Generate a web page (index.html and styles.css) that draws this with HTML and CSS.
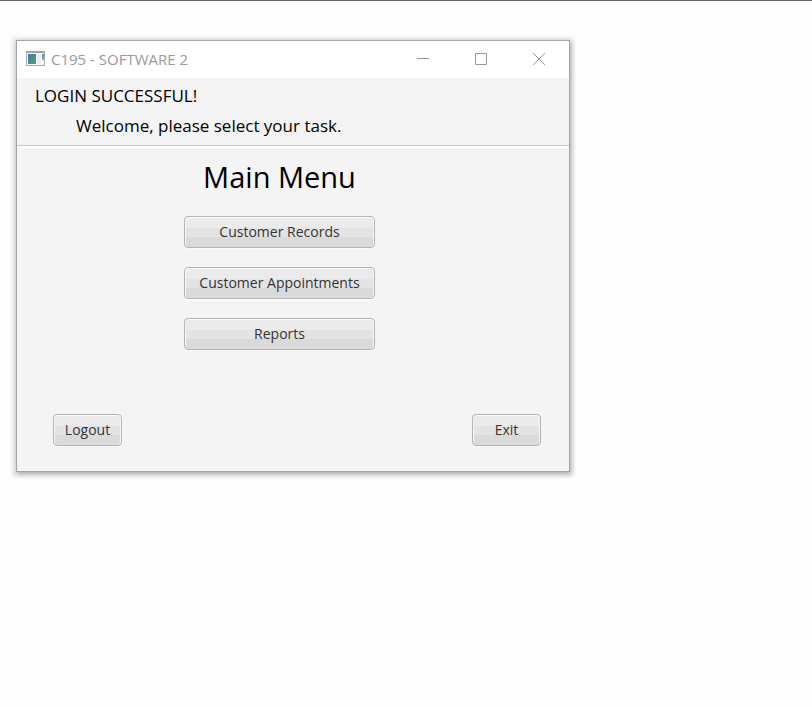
FILE: index.html
```
<!DOCTYPE html>
<html lang="en">
<head>
<meta charset="utf-8">
<meta name="viewport" content="width=device-width, initial-scale=1">
<title>C195 - SOFTWARE 2</title>
<link rel="stylesheet" href="styles.css">
</head>
<body>
<main class="window">
  <div class="titlebar">
    <svg class="app-icon" width="20" height="16" viewBox="0 0 20 16" aria-hidden="true">
      <defs>
        <linearGradient id="pane" x1="0" y1="0" x2="1" y2="1">
          <stop offset="0" stop-color="#3f78a0"/>
          <stop offset="1" stop-color="#4fa57c"/>
        </linearGradient>
        <linearGradient id="bar" x1="0" y1="0" x2="0" y2="1">
          <stop offset="0" stop-color="#4c86b8"/>
          <stop offset="1" stop-color="#7cc09a"/>
        </linearGradient>
      </defs>
      <rect x="0.5" y="0.5" width="18" height="14" fill="#fdfdfd" stroke="#a9a9ab"/>
      <path d="M0 1H19" stroke="#a3a3a8" stroke-width="2"/>
      <rect x="2" y="3" width="8" height="10" fill="url(#pane)"/>
      <rect x="11" y="3" width="4" height="10" fill="#ececf0"/>
      <rect x="16" y="3" width="2" height="6" fill="url(#bar)"/>
    </svg>
    <span class="title">C195 - SOFTWARE 2</span>
    <div class="controls">
      <button class="control" type="button" aria-label="Minimize"><svg width="12" height="12" viewBox="0 0 12 12"><path d="M0 5.5H12"/></svg></button>
      <button class="control" type="button" aria-label="Maximize"><svg width="12" height="12" viewBox="0 0 12 12"><path d="M.5 .5H11.5V11.5H.5Z"/></svg></button>
      <button class="control" type="button" aria-label="Close"><svg width="12" height="12" viewBox="0 0 12 12"><path d="M0 0L12 12M12 0L0 12"/></svg></button>
    </div>
  </div>
  <header class="message">
    <p class="status">LOGIN SUCCESSFUL!</p>
    <p class="welcome">Welcome, please select your task.</p>
  </header>
  <section class="content">
    <h1 class="heading">Main Menu</h1>
    <nav class="menu">
      <button class="button" type="button">Customer Records</button>
      <button class="button" type="button">Customer Appointments</button>
      <button class="button" type="button">Reports</button>
    </nav>
  </section>
  <footer class="actions">
    <button class="button small" type="button">Logout</button>
    <button class="button small" type="button">Exit</button>
  </footer>
</main>
</body>
</html>
```
FILE: styles.css
```
* {
  box-sizing: border-box;
}

body {
  margin: 0;
  padding: 39px 16px;
  background: #fefefe;
  border-top: 1px solid #656366;
  font-family: "Open Sans", "Noto Sans", sans-serif;
  color: #000;
}

.window {
  width: 100%;
  max-width: 554px;
  background: #f4f4f4;
  border: 1px solid #a4a4a4;
  box-shadow: 0 1px 4px 4px rgba(0, 0, 0, 0.08), 1px 2px 5px rgba(0, 0, 0, 0.28);
}

.titlebar {
  display: flex;
  align-items: center;
  height: 37px;
  padding: 0 1px 2px 9px;
  background: #fff;
}

.title {
  margin-left: 5px;
  font-size: 15px;
  color: #999;
}

.controls {
  display: flex;
  align-self: stretch;
  margin-left: auto;
}

.control {
  display: flex;
  align-items: center;
  justify-content: center;
  width: 58px;
  padding: 0;
  border: 0;
  background: none;
}

.control svg {
  fill: none;
  stroke: #999;
}

.message {
  display: grid;
  gap: 6px;
  padding: 6px 18px 7px;
  border-bottom: 1px solid #c6c6c6;
  font-size: 17px;
  line-height: 24px;
}

.message p {
  margin: 0;
}

.welcome {
  padding-left: 41px;
}

.content {
  display: flex;
  flex-direction: column;
  align-items: center;
  padding: 9px 45px 0 18px;
  border-top: 2px solid #fdfdfd;
}

.heading {
  margin: 0;
  font-size: 29px;
  font-weight: 400;
  line-height: 40px;
}

.menu {
  display: grid;
  gap: 19px;
  width: 191px;
  margin: 19px 0 64px;
}

.button {
  height: 32px;
  padding: 0;
  border: 1px solid #b5b5b5;
  border-radius: 4px;
  background: linear-gradient(#ebebeb 0 11px, #e3e3e3 11px 20px, #dadada 20px);
  box-shadow: inset 0 1px #fcfcfc, inset 1px 0 #f4f4f4, inset -1px 0 #f4f4f4, 0 1px #fafafa;
  font: 14px/20px "Open Sans", "Noto Sans", sans-serif;
  color: #333;
}

.small {
  width: 69px;
}

.actions {
  display: flex;
  justify-content: space-between;
  padding: 0 28px 25px 36px;
}
```
